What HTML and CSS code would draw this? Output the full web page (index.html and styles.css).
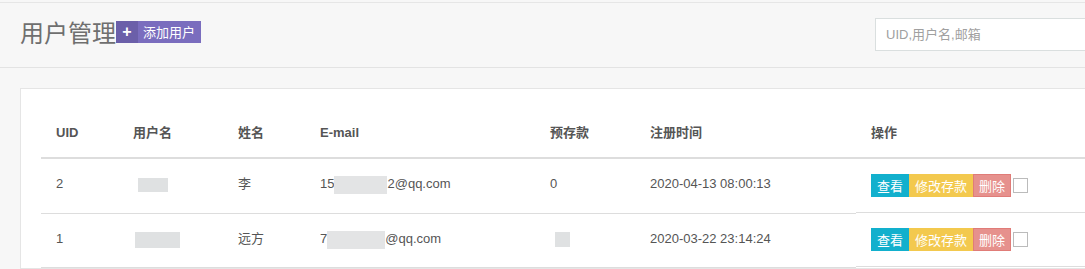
FILE: index.html
```html
<!DOCTYPE html>
<html>

<head>
    <title>用户管理</title>
    <link rel="stylesheet" href="styles.css">
</head>

<body>
    <div class="topline"></div>
    <div class="page">
        <div class="page-header">
            <h1>用户管理</h1>
            <a class="btn-add"><span class="btn-icon">+</span><span class="btn-text">添加用户</span></a>
            <div class="search">
                <input type="text" placeholder="UID,用户名,邮箱">
                <span class="search-btn"></span>
            </div>
        </div>

        <div class="card">
            <table class="user-table">
                <colgroup>
                    <col style="width: 77px">
                    <col style="width: 105px">
                    <col style="width: 82px">
                    <col style="width: 230px">
                    <col style="width: 100px">
                    <col style="width: 221px">
                    <col>
                </colgroup>
                <thead>
                    <tr>
                        <th>UID</th>
                        <th>用户名</th>
                        <th>姓名</th>
                        <th>E-mail</th>
                        <th>预存款</th>
                        <th>注册时间</th>
                        <th>操作</th>
                    </tr>
                </thead>
                <tbody>
                    <tr>
                        <td>2</td>
                        <td><span class="blur blur-name1"></span></td>
                        <td>李</td>
                        <td>15<span class="blur blur-mail1"></span>2@qq.com</td>
                        <td>0</td>
                        <td>2020-04-13 08:00:13</td>
                        <td class="ops">
                            <a class="op op-view">查看</a><a class="op op-edit">修改存款</a><a class="op op-del">删除</a><input type="checkbox" class="check">
                        </td>
                    </tr>
                    <tr>
                        <td>1</td>
                        <td><span class="blur blur-name2"></span></td>
                        <td>远方</td>
                        <td>7<span class="blur blur-mail2"></span>@qq.com</td>
                        <td><span class="blur blur-money"></span></td>
                        <td>2020-03-22 23:14:24</td>
                        <td class="ops">
                            <a class="op op-view">查看</a><a class="op op-edit">修改存款</a><a class="op op-del">删除</a><input type="checkbox" class="check">
                        </td>
                    </tr>
                </tbody>
            </table>
        </div>
    </div>
</body>

</html>
```

FILE: styles.css
```css
body {
    margin: 0;
    background-color: #f7f7f7;
    font-family: "Liberation Sans", "Noto Sans CJK SC", sans-serif;
    color: #555;
    overflow: hidden;
}

.topline {
    height: 2px;
    border-bottom: 1px solid #e6e6e6;
}

.page {
    width: 1130px;
}

.page-header {
    display: flex;
    align-items: flex-start;
    height: 49px;
    padding: 15px 0 0 20px;
    border-bottom: 1px solid #e3e3e3;
}

h1 {
    margin: 0;
    font-size: 24px;
    line-height: 27px;
    font-weight: 400;
    color: #6f6f6f;
    font-family: "Noto Sans CJK SC", sans-serif;
}

.btn-add {
    display: flex;
    margin-top: 3px;
    height: 22px;
    color: #fff;
    font-size: 13px;
    line-height: 22px;
    font-family: "Noto Sans CJK SC", sans-serif;
}

.btn-icon {
    width: 22px;
    text-align: center;
    background-color: #6b5fa9;
    font-weight: 700;
    font-size: 16px;
    font-family: "Liberation Sans", sans-serif;
}

.btn-text {
    padding: 0 6px 0 5px;
    background-color: #7a6dbe;
}

.search {
    display: flex;
    margin-left: 674px;
}

.search input {
    width: 190px;
    height: 31px;
    margin: 0;
    padding: 0 10px;
    border: 1px solid #dadfdf;
    background: #fff;
    font-size: 13px;
    font-family: "Liberation Sans", "Noto Sans CJK SC", sans-serif;
    color: #555;
    outline: none;
}

.search input::placeholder {
    color: #a0a0a0;
}

.search-btn {
    width: 30px;
    height: 33px;
    background-color: #f4f4f4;
    border-left: 1px solid #dadfdf;
    margin-left: -1px;
}

.card {
    margin: 20px 0 0 20px;
    padding: 20px 0 0 20px;
    background-color: #fff;
    border: 1px solid #e5e5e5;
}

.user-table {
    width: 1090px;
    border-collapse: collapse;
    table-layout: fixed;
    font-size: 13px;
}

.user-table th {
    text-align: left;
    padding: 14px 15px;
    line-height: 20px;
    font-weight: 700;
    color: #555;
    border-bottom: 2px solid #ddd;
}

.user-table td {
    padding: 15px 15px;
    line-height: 20px;
    height: 23px;
    vertical-align: top;
    border-bottom: 1px solid #ddd;
    white-space: nowrap;
    color: #555;
}

.blur {
    display: inline-block;
    vertical-align: top;
    background-color: #dfe1e2;
}

.blur-name1 {
    width: 30px;
    height: 14px;
    margin: 4px 0 0 5px;
}

.blur-name2 {
    width: 45px;
    height: 16px;
    margin: 3px 0 0 2px;
}

.blur-mail1 {
    width: 53px;
    height: 18px;
    margin-top: 2px;
    background-color: #e3e4e5;
}

.blur-mail2 {
    width: 58px;
    height: 18px;
    margin-top: 2px;
    background-color: #e3e4e5;
}

.blur-money {
    width: 15px;
    height: 15px;
    margin: 3px 0 0 5px;
}

.ops {
    display: flex;
    align-items: center;
    padding-top: 15px;
}

.op {
    display: inline-block;
    height: 23px;
    padding: 0 6px;
    line-height: 23px;
    color: #fff;
    font-size: 13px;
    font-family: "Noto Sans CJK SC", sans-serif;
    box-sizing: border-box;
}

.op-view {
    background-color: #12b0cd;
}

.op-edit {
    background-color: #f3c94e;
}

.op-del {
    background-color: #e6918d;
    border: 1px solid #e07c78;
    padding: 0 5px;
    line-height: 21px;
}

.check {
    margin: 0 0 0 2px;
    width: 15px;
    height: 15px;
    appearance: none;
    border: 1px solid #bbb;
    background: #fff;
}
```
